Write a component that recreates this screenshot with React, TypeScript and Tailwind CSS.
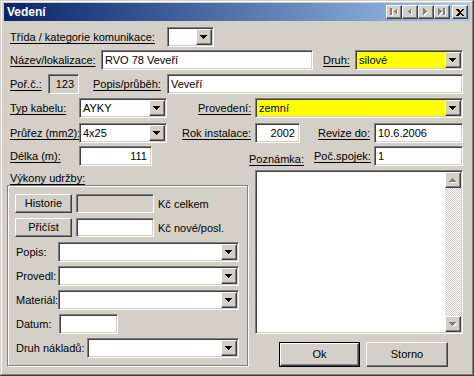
import type { ReactNode } from 'react'

const sunken =
  'border border-t-[#808080] border-l-[#808080] border-b-white border-r-white p-[1px] shadow-[inset_1px_1px_0_#404040,inset_-1px_-1px_0_#d4d0c8]'
const raised =
  'border border-t-white border-l-white border-b-[#404040] border-r-[#404040] shadow-[inset_-1px_-1px_0_#808080]'

function DownArrow({ disabled = false }: { disabled?: boolean }) {
  return (
    <svg width="8" height="5" viewBox="0 0 8 5" shapeRendering="crispEdges">
      {disabled && <path d="M1 1h7L4.5 5z" fill="#fff" />}
      <path d="M0 0h7L3.5 4z" fill={disabled ? '#808080' : '#000'} />
    </svg>
  )
}

function UpArrow() {
  return (
    <svg width="8" height="5" viewBox="0 0 8 5" shapeRendering="crispEdges">
      <path d="M1 5h7L4.5 1z" fill="#fff" />
      <path d="M0 4h7L3.5 0z" fill="#808080" />
    </svg>
  )
}

function Label({ children, className = '', plain = false }: { children: ReactNode; className?: string; plain?: boolean }) {
  return (
    <div className={`shrink-0 leading-[14px] whitespace-nowrap ${plain ? '' : 'underline underline-offset-[2px]'} ${className}`}>
      {children}
    </div>
  )
}

function Field({ value = '', className = '', right = false, grey = false }: { value?: string; className?: string; right?: boolean; grey?: boolean }) {
  return (
    <div className={`${sunken} h-full shrink-0 ${grey ? 'bg-[#d4d0c8]' : 'bg-white'} ${className}`}>
      <div className={`h-full leading-[16px] px-[2px] whitespace-nowrap ${right ? 'text-right pr-[3px]' : ''}`}>{value}</div>
    </div>
  )
}

function Combo({ value = '', className = '', yellow = false }: { value?: string; className?: string; yellow?: boolean }) {
  return (
    <div className={`${sunken} h-[20px] shrink-0 flex ${yellow ? 'bg-[#ffff00]' : 'bg-white'} ${className}`}>
      <div className="flex-1 leading-[16px] pl-[2px] whitespace-nowrap overflow-hidden">{value}</div>
      <div className={`${raised} bg-[#d4d0c8] w-[16px] h-[16px] flex items-center justify-center`}>
        <DownArrow />
      </div>
    </div>
  )
}

function Button({ children, className = '', isDefault = false }: { children: ReactNode; className?: string; isDefault?: boolean }) {
  if (isDefault) {
    return (
      <div className={`border border-black shrink-0 ${className}`}>
        <div className={`${raised} bg-[#d4d0c8] h-full flex items-center justify-center`}>{children}</div>
      </div>
    )
  }
  return (
    <div className={`${raised} bg-[#d4d0c8] shrink-0 flex items-center justify-center ${className}`}>{children}</div>
  )
}

function NavIcon({ kind }: { kind: 'first' | 'prev' | 'next' | 'last' }) {
  const shapes: Record<string, string> = {
    first: 'M1 0h2v7H1zM8 0v7L4.5 3.5z',
    prev: 'M6 0v7L2.5 3.5z',
    next: 'M2 0v7l3.5-3.5z',
    last: 'M1 0v7l3.5-3.5zM6 0h2v7H6z',
  }
  return (
    <svg width="10" height="9" viewBox="0 0 10 9" shapeRendering="crispEdges">
      <path d={shapes[kind]} fill="#fff" transform="translate(1 1)" />
      <path d={shapes[kind]} fill="#808080" />
    </svg>
  )
}

function TitleButton({ children }: { children: ReactNode }) {
  return (
    <div className={`${raised} bg-[#d4d0c8] w-[16px] h-[14px] flex items-center justify-center`}>{children}</div>
  )
}

export default function App() {
  return (
    <div className="w-[474px] h-[376px] bg-[#d4d0c8] px-[4px] pt-[3px] text-[11px] text-black font-['Liberation_Sans',Arial,sans-serif] shadow-[inset_-1px_-1px_0_#404040,inset_1px_1px_0_#d4d0c8,inset_-2px_-2px_0_#808080,inset_2px_2px_0_#fff] overflow-hidden">
      {/* title bar */}
      <div className="h-[18px] flex items-center bg-gradient-to-r from-[#0a246a] to-[#a6caf0] pl-[3px] pr-[2px]">
        <div className="text-white font-bold text-[12px] leading-[14px] flex-1">Vedení</div>
        <div className="flex">
          <TitleButton><NavIcon kind="first" /></TitleButton>
          <TitleButton><NavIcon kind="prev" /></TitleButton>
          <TitleButton><NavIcon kind="next" /></TitleButton>
          <TitleButton><NavIcon kind="last" /></TitleButton>
        </div>
        <div className="ml-[2px]">
          <TitleButton>
            <svg width="8" height="7" viewBox="0 0 8 7" shapeRendering="crispEdges">
              <path d="M0 0h2l2 2 2-2h2L5 3.5 8 7H6L4 5 2 7H0l3-3.5z" fill="#000" />
            </svg>
          </TitleButton>
        </div>
      </div>

      <div className="pl-[3px]">
        {/* row 1 */}
        <div className="flex items-center h-[20px] mt-[6px] pl-[3px]">
          <Label className="w-[157px]">Třída / kategorie komunikace:</Label>
          <Combo className="w-[47px]" />
        </div>

        {/* row 2 */}
        <div className="flex items-center h-[20px] mt-[3px] pl-[3px]">
          <Label className="w-[91px]">Název/lokalizace:</Label>
          <Field className="w-[212px]" value="RVO 78 Veveří" />
          <Label className="w-[42px] pl-[10px]">Druh:</Label>
          <Combo className="w-[108px]" value="silové" yellow />
        </div>

        {/* row 3 */}
        <div className="flex items-center h-[20px] mt-[4px] pl-[3px]">
          <Label className="w-[38px]">Poř.č.:</Label>
          <Field className="w-[31px]" value="123" right grey />
          <Label className="w-[88px] pl-[14px]">Popis/průběh:</Label>
          <Field className="w-[296px]" value="Veveří" />
        </div>

        {/* row 4 */}
        <div className="flex items-center h-[20px] mt-[4px] pl-[3px]">
          <Label className="w-[69px]">Typ kabelu:</Label>
          <Combo className="w-[88px]" value="AYKY" />
          <Label className="w-[88px] pl-[31px]">Provedení:</Label>
          <Combo className="w-[208px]" value="zemní" yellow />
        </div>

        {/* row 5 */}
        <div className="flex items-center h-[20px] mt-[5px] pl-[3px]">
          <Label className="w-[69px]">Průřez (mm2):</Label>
          <Combo className="w-[88px]" value="4x25" />
          <Label className="w-[88px] pl-[15px]">Rok instalace:</Label>
          <Field className="w-[45px]" value="2002" right />
          <Label className="w-[74px] pl-[18px]">Revize do:</Label>
          <Field className="w-[89px]" value="10.6.2006" />
        </div>

        {/* row 6 */}
        <div className="flex items-center h-[20px] mt-[3px] pl-[3px]">
          <Label className="w-[69px]">Délka (m):</Label>
          <Field className="w-[73px]" value="111" right />
          <div className="w-[97px] shrink-0" />
          <Label className="w-[65px] self-end">Poznámka:</Label>
          <Label className="w-[60px]">Poč.spojek:</Label>
          <Field className="w-[89px]" value="1" />
        </div>

        {/* lower part */}
        <div className="flex mt-[2px]">
          <div className="w-[241px] shrink-0">
            <Label className="pl-[3px] pt-[3px] h-[17px]">Výkony udržby:</Label>
            <div className="h-[181px] border border-[#808080] shadow-[inset_1px_1px_0_#fff,1px_1px_0_#fff] pl-[7px] pt-[8px]">
              <div className="flex items-center h-[19px]">
                <Button className="w-[57px] h-full">Historie</Button>
                <Field className="w-[78px] ml-[4px]" grey />
                <Label plain className="ml-[4px]">Kč celkem</Label>
              </div>
              <div className="flex items-center h-[19px] mt-[5px]">
                <Button className="w-[57px] h-full">Přičíst</Button>
                <Field className="w-[78px] ml-[4px]" />
                <Label plain className="ml-[4px]">Kč nové/posl.</Label>
              </div>
              <div className="flex items-center h-[20px] mt-[5px]">
                <Label plain className="w-[43px] pl-[1px]">Popis:</Label>
                <Combo className="w-[181px]" />
              </div>
              <div className="flex items-center h-[20px] mt-[4px]">
                <Label plain className="w-[43px] pl-[1px]">Provedl:</Label>
                <Combo className="w-[181px]" />
              </div>
              <div className="flex items-center h-[20px] mt-[4px]">
                <Label plain className="w-[43px] pl-[1px]">Materiál:</Label>
                <Combo className="w-[181px]" />
              </div>
              <div className="flex items-center h-[20px] mt-[4px]">
                <Label plain className="w-[44px] pl-[1px]">Datum:</Label>
                <Field className="w-[59px]" />
              </div>
              <div className="flex items-center h-[20px] mt-[4px]">
                <Label plain className="w-[72px] pl-[1px]">Druh nákladů:</Label>
                <Combo className="w-[152px]" />
              </div>
            </div>
          </div>

          <div className="w-[208px] ml-[7px] shrink-0">
            <div className={`${sunken} h-[164px] mt-[2px] bg-white flex`}>
              <div className="flex-1" />
              <div className="w-[16px] h-full flex flex-col">
                <div className={`${raised} bg-[#d4d0c8] h-[16px] flex items-center justify-center`}>
                  <UpArrow />
                </div>
                <div className="flex-1 bg-[repeating-conic-gradient(#d4d0c8_0_25%,#ffffff_0_50%)] bg-[length:2px_2px]" />
                <div className={`${raised} bg-[#d4d0c8] h-[16px] flex items-center justify-center`}>
                  <DownArrow disabled />
                </div>
              </div>
            </div>
            <div className="flex mt-[8px] h-[25px]">
              <Button isDefault className="w-[81px] h-full ml-[24px]">Ok</Button>
              <Button className="w-[82px] h-full ml-[6px]">Storno</Button>
            </div>
          </div>
        </div>
      </div>
    </div>
  )
}
